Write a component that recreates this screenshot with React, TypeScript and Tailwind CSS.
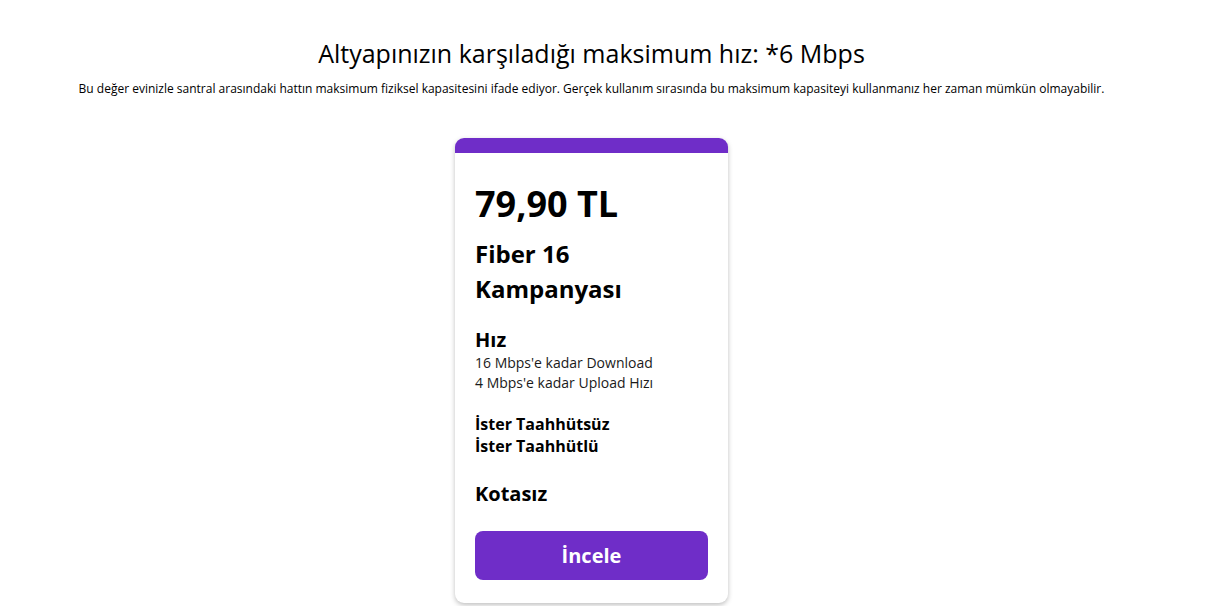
const features = ["16 Mbps'e kadar Download", "4 Mbps'e kadar Upload Hızı"];

const App = () => {
  return (
    <div className="min-h-[606px] w-[1232px] bg-white font-['Open_Sans',sans-serif] text-black">
      <div className="flex w-[1183px] flex-col items-center">
        <h1 className="mt-[36px] text-[25px] leading-[34px] font-normal">
          Altyapınızın karşıladığı maksimum hız: *6 Mbps
        </h1>
        <p className="mt-[11px] text-[12px] leading-[16px]">
          Bu değer evinizle santral arasındaki hattın maksimum fiziksel kapasitesini ifade ediyor. Gerçek kullanım sırasında bu maksimum kapasiteyi kullanmanız her zaman mümkün olmayabilir.
        </p>

        <div className="mt-[41px] w-[273px] overflow-hidden rounded-[9px] bg-white shadow-[0_2px_5px_rgba(0,0,0,0.25)]">
          <div className="h-[15px] bg-[#6f2dc8]" />
          <div className="px-[20px] pt-[27px] pb-[23px]">
            <div className="text-[36px] leading-[48px] font-bold">79,90 TL</div>
            <div className="mt-[8px] text-[24px] leading-[35px] font-bold">
              <div>Fiber 16</div>
              <div>Kampanyası</div>
            </div>
            <div className="mt-[20px] text-[20px] leading-[27px] font-bold">Hız</div>
            <div className="text-[14px] leading-[20px] text-[#1a1a1a]">
              {features.map((f) => (
                <div key={f}>{f}</div>
              ))}
            </div>
            <div className="mt-[20px] text-[16px] leading-[22px] font-bold">
              <div>İster Taahhütsüz</div>
              <div>İster Taahhütlü</div>
            </div>
            <div className="mt-[24px] text-[20px] leading-[26px] font-bold">Kotasız</div>
            <button className="mt-[24px] h-[49px] w-full rounded-[8px] bg-[#6f2dc8] text-[20px] font-bold text-white">
              İncele
            </button>
          </div>
        </div>
      </div>
    </div>
  );
};

export default App;
